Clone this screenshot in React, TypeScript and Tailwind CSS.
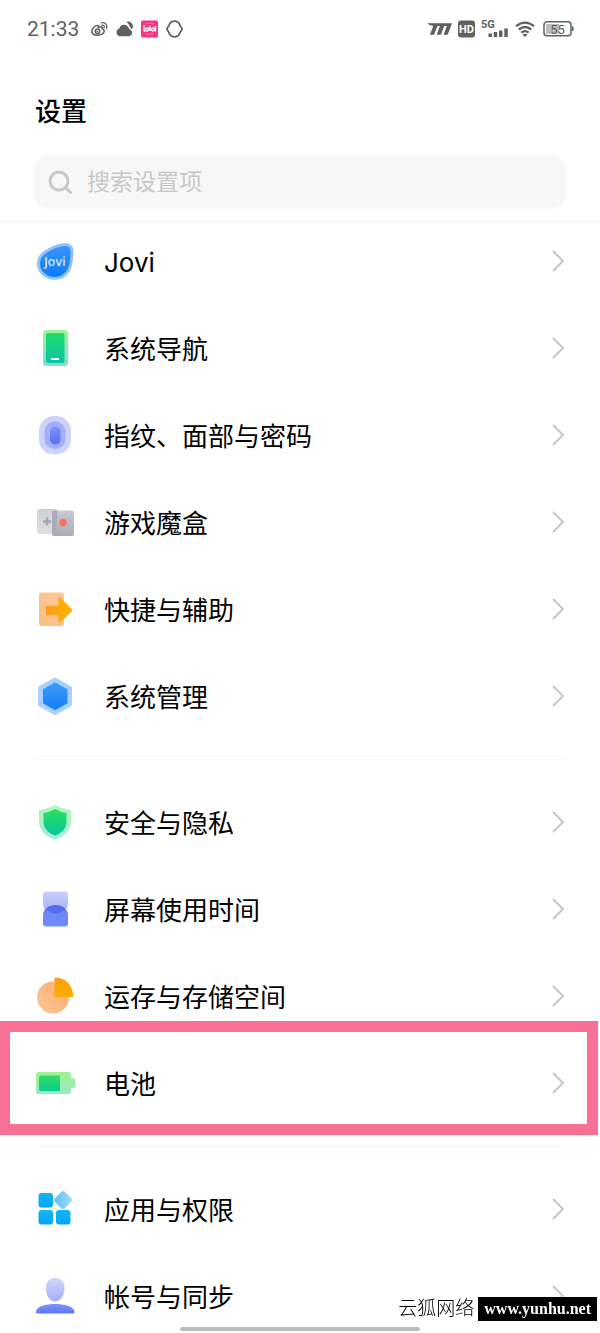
import type { ReactNode } from 'react';

type Item = {
  label: string;
  icon: ReactNode;
  highlighted?: boolean;
};

const Gradient = ({ id, from, to }: { id: string; from: string; to: string }) => (
  <linearGradient id={id} x1="0" y1="0" x2="0" y2="1">
    <stop offset="0" stopColor={from} />
    <stop offset="1" stopColor={to} />
  </linearGradient>
);

const Icon = ({ children }: { children: ReactNode }) => (
  <svg className="size-10 shrink-0" viewBox="0 0 40 40" fill="none" aria-hidden="true">
    {children}
  </svg>
);

const groups: Item[][] = [
  [
    {
      label: 'Jovi',
      icon: (
        <Icon>
          <defs><Gradient id="jovi" from="#3a94fb" to="#0b7cf8" /></defs>
          <path d="M28 2.3C34 1.500 38 4 38.400 9C38.700 14 38.300 19 37 24C35 33 28.500 38.700 20 38.700C9.500 38.700 2 32 2 22.500C2 15.500 7 10.500 13 7.500C18 4.700 23 3 28 2.300Z" fill="#8fc4fb" />
          <path d="M28 5.200C33 4.700 35.400 6.500 35.600 10C35.800 14 35.300 18.500 34.300 23C32.500 31 27 36 20 36C11 36 5 30 5 22.500C5 17 9 12.700 15 9.700C19.500 7.300 24 5.700 28 5.200Z" fill="url(#jovi)" />
          <text x="20" y="25" textAnchor="middle" fontSize="12" fontFamily="DejaVu Sans, sans-serif" fill="#fff">Jovi</text>
        </Icon>
      ),
    },
    {
      label: '系统导航',
      icon: (
        <Icon>
          <defs>
            <Gradient id="nav-a" from="#a0f29a" to="#7edfcf" />
            <Gradient id="nav-b" from="#1fdb69" to="#08c5a4" />
          </defs>
          <rect x="8" y="2" width="25" height="36" rx="3.5" fill="url(#nav-a)" />
          <rect x="11" y="5" width="18.5" height="30" rx="2" fill="url(#nav-b)" />
          <rect x="16" y="30" width="8" height="2" rx="0.5" fill="#fff" />
        </Icon>
      ),
    },
    {
      label: '指纹、面部与密码',
      icon: (
        <Icon>
          <defs><Gradient id="finger" from="#7b93fb" to="#5a6ff2" /></defs>
          <rect x="4" y="1" width="32" height="38.5" rx="15" fill="#cdd3fa" />
          <rect x="9.5" y="6.5" width="21" height="27.5" rx="10" fill="#a3b0f8" />
          <rect x="15" y="11.5" width="10.5" height="18" rx="5" fill="url(#finger)" />
        </Icon>
      ),
    },
    {
      label: '游戏魔盒',
      icon: (
        <Icon>
          <defs>
            <Gradient id="game-a" from="#cfd1d8" to="#dddfe3" />
            <Gradient id="game-b" from="#c9cad2" to="#a9abb6" />
          </defs>
          <rect x="2" y="7" width="21" height="25" rx="3" fill="url(#game-a)" />
          <rect x="17" y="8.5" width="22" height="25.5" rx="2.5" fill="url(#game-b)" />
          <path d="M19 8.500h3v25.500h-3a2 2 0 0 1-2-2V10.500a2 2 0 0 1 2-2z" fill="#aaacb9" />
          <path d="M8 19.500h8M12 15.500v8" stroke="#a4a6b1" strokeWidth="2.5" />
          <circle cx="28" cy="20.5" r="3.7" fill="#fb7060" />
        </Icon>
      ),
    },
    {
      label: '快捷与辅助',
      icon: (
        <Icon>
          <defs>
            <linearGradient id="quick-a" x1="1" y1="0" x2="0" y2="1">
              <stop offset="0" stopColor="#fdc79b" />
              <stop offset="1" stopColor="#fbbd83" />
            </linearGradient>
            <linearGradient id="quick-b">
              <stop offset="0" stopColor="#fb9d1c" />
              <stop offset="1" stopColor="#ffb400" />
            </linearGradient>
          </defs>
          <rect x="4" y="3.5" width="25" height="33.5" rx="3" fill="url(#quick-a)" />
          <path d="M12 17H23.500V9Q23.500 7 25 8.200L37 20.300Q37.800 21.200 37 22L25 33.800Q23.500 35 23.500 33V26H12Q11 26 11 25V18Q11 17 12 17Z" fill="url(#quick-b)" />
        </Icon>
      ),
    },
    {
      label: '系统管理',
      icon: (
        <Icon>
          <defs><Gradient id="manage" from="#3c9bfb" to="#1580fa" /></defs>
          <path d="M20 3.500L35 12V28.500L20 37L5 28.500V12Z" fill="#a9d1fb" stroke="#a9d1fb" strokeWidth="4" strokeLinejoin="round" />
          <path d="M20 8L31 14V26.500L20 32.500L9.500 26.500V14Z" fill="url(#manage)" stroke="url(#manage)" strokeWidth="3" strokeLinejoin="round" />
        </Icon>
      ),
    },
  ],
  [
    {
      label: '安全与隐私',
      icon: (
        <Icon>
          <defs>
            <Gradient id="safe-a" from="#b4f6b3" to="#a4ebdc" />
            <Gradient id="safe-b" from="#28df60" to="#08c59c" />
          </defs>
          <path d="M20 3Q27 7 35 8Q36 8 36 9.500V19C36 28 30 34.500 20 37.500C10 34.500 4 28 4 19V9.500Q4 8 5 8Q13 7 20 3Z" fill="url(#safe-a)" />
          <path d="M20 7Q25 10 31.500 11V19.500C31.500 26.500 27 31 20 33.500C13 31 8.500 26.500 8.500 19.500V11Q15 10 20 7Z" fill="url(#safe-b)" />
        </Icon>
      ),
    },
    {
      label: '屏幕使用时间',
      icon: (
        <Icon>
          <defs>
            <Gradient id="time-a" from="#c9d1fb" to="#a2b0f8" />
            <Gradient id="time-b" from="#6a82f7" to="#718df9" />
          </defs>
          <path d="M11 2.500H30Q33 2.500 33 5.500V15C33 20.500 27 24.500 20.500 24.500S8 20.500 8 15V5.500Q8 2.500 11 2.500Z" fill="url(#time-a)" />
          <path d="M20.500 16C27 16 33 20 33 26V34.500Q33 37.500 30 37.500H11Q8 37.500 8 34.500V26C8 20 14 16 20.500 16Z" fill="url(#time-b)" />
          <path d="M10.600 20.200Q20.500 12 30.400 20.200Q20.500 28.500 10.600 20.200Z" fill="#546df2" />
        </Icon>
      ),
    },
    {
      label: '运存与存储空间',
      icon: (
        <Icon>
          <defs>
            <linearGradient id="store-a" x1="1" y1="0" x2="0" y2="1">
              <stop offset="0" stopColor="#fbb069" />
              <stop offset="1" stopColor="#fdc49a" />
            </linearGradient>
            <Gradient id="store-b" from="#fb9d10" to="#ffae00" />
          </defs>
          <circle cx="18" cy="21.5" r="16" fill="url(#store-a)" />
          <path d="M20.500 1.500Q36 2.500 38.500 19.500Q38.500 21 37 21H19.500V2.500Q19.500 1.500 20.500 1.500Z" fill="url(#store-b)" />
        </Icon>
      ),
    },
    {
      label: '电池',
      highlighted: true,
      icon: (
        <Icon>
          <defs>
            <Gradient id="batt-a" from="#a0f28e" to="#98e8c5" />
            <Gradient id="batt-b" from="#2fdd62" to="#06cf93" />
          </defs>
          <path d="M4 9H33Q36 9 36 12V15H38Q40 15 40 17V23Q40 25 38 25H36V28Q36 31 33 31H4Q1 31 1 28V12Q1 9 4 9Z" fill="url(#batt-a)" />
          <path d="M6 12.500H25V28H6Q4 28 4 26V14.500Q4 12.500 6 12.500Z" fill="url(#batt-b)" />
        </Icon>
      ),
    },
  ],
  [
    {
      label: '应用与权限',
      icon: (
        <Icon>
          <defs>
            <Gradient id="apps" from="#15b5f5" to="#03a4fb" />
            <linearGradient id="apps-d">
              <stop offset="0" stopColor="#69c4f9" />
              <stop offset="1" stopColor="#90d8fb" />
            </linearGradient>
          </defs>
          <rect x="3.5" y="4" width="14.5" height="14.5" rx="3" fill="url(#apps)" />
          <rect x="3.5" y="21" width="14.5" height="14.5" rx="3" fill="url(#apps)" />
          <rect x="21" y="21" width="14.5" height="14.5" rx="3" fill="url(#apps)" />
          <path d="M28 4L35 11L28 18L21 11Z" fill="url(#apps-d)" stroke="url(#apps-d)" strokeWidth="4" strokeLinejoin="round" />
        </Icon>
      ),
    },
    {
      label: '帐号与同步',
      icon: (
        <Icon>
          <defs>
            <Gradient id="user-a" from="#cfd5fc" to="#a4b0f8" />
            <Gradient id="user-b" from="#7f95f8" to="#5f76f4" />
          </defs>
          <path d="M20 2C26 2 29.500 6 29.500 12C29.500 20 25 25.500 20 25.500S11 20 11 12C11 6 14 2 20 2Z" fill="url(#user-a)" />
          <path d="M20 28C29 28 39 30 39.500 36Q39.500 37.500 38 37.500H2.500Q1 37.500 1 36C1.500 30 11 28 20 28Z" fill="url(#user-b)" />
        </Icon>
      ),
    },
  ],
];

const StatusBar = () => (
  <div className="flex items-center justify-between pt-4 pr-[26px] pl-[27px] text-[#606060]">
    <div className="flex items-center gap-2">
      <time className="mr-1 text-[21px] leading-[26px]">21:33</time>
      <svg className="h-[18px] w-[17px]" viewBox="0 0 17 18" fill="none" stroke="currentColor" aria-hidden="true">
        <path d="M7 5.800C5 4.500.8 8.500.8 11.300C.8 14 3.500 15.200 6.500 15.200C10.500 15.200 13.200 13 13.200 11C13.200 9.500 12 9 11.200 8.800C11.800 7 10.500 6.200 7.600 7.400C7.900 6.500 7.600 6 7 5.800Z" strokeWidth="1.6" />
        <circle cx="6.5" cy="11.3" r="2.3" strokeWidth="1.5" />
        <circle cx="6.2" cy="11.6" r="0.9" fill="currentColor" stroke="none" />
        <path d="M10.500 2.800C14.500 2 16.500 5 15.500 8.300M10.800 5.200C12.700 4.800 13.600 6 13.100 7.600" strokeWidth="1.3" strokeLinecap="round" />
      </svg>
      <svg className="h-[18px] w-[17px]" viewBox="0 0 17 18" fill="currentColor" aria-hidden="true">
        <path d="M4.200 16.300A4 4 0 0 1 3.300 8.500A5 5 0 0 1 12.600 7.600C13 9 13.400 9.300 14.300 9.700A3.500 3.500 0 0 1 13.300 16.300Z" />
        <path d="M10.300 2A4.800 4.800 0 0 1 16.500 8.300L15.800 9.200Q14.300 8.400 14.100 7Q13.400 4 10.300 2Z" />
      </svg>
      <svg className="h-[18px] w-[17px]" viewBox="0 0 17 18" aria-hidden="true">
        <rect y="0.5" width="17" height="17" rx="1.5" fill="#fb3187" />
        <path d="M3 5.500v5q0 1 1.500 1M14.500 6v5.500M9 5.500v5.500" stroke="#fff" strokeWidth="1.5" fill="none" />
        <circle cx="6.2" cy="9.5" r="1.5" stroke="#fff" strokeWidth="1.3" fill="none" />
        <circle cx="12" cy="9.5" r="1.5" stroke="#fff" strokeWidth="1.3" fill="none" />
        <path d="M4 4Q8.500 2.500 13 4M5 13.700Q8.500 14.500 12 13.700" stroke="#fc85b6" fill="none" />
      </svg>
      <svg className="h-[18px] w-[17px]" viewBox="0 0 17 18" fill="none" stroke="currentColor" strokeWidth="1.8" strokeLinejoin="round" aria-hidden="true">
        <path d="M5.500 1.800Q8.500.6 11.500 1.800Q13.500 3 14.300 6Q16 8 16 9Q16 10 14.300 12Q13.500 15 11.500 16.200Q8.500 17.400 5.500 16.200Q3.500 15 2.700 12Q1 10 1 9Q1 8 2.700 6Q3.500 3 5.500 1.800Z" />
      </svg>
    </div>
    <div className="flex items-center gap-[6px]">
      <svg className="h-[18px] w-[25px]" viewBox="0 0 26 18" fill="currentColor" aria-hidden="true">
        <path d="M0 3H26L21.500 15H17.200L20.700 6H17.900L14.500 15H10L13.500 6H10.900L7.300 15H3L6.500 6Q3.500 6 0 3Z" />
      </svg>
      <svg className="h-[18px] w-[17px]" viewBox="0 0 17 18" aria-hidden="true">
        <rect y="0.5" width="17" height="17" rx="3" fill="currentColor" />
        <text x="8.5" y="13" textAnchor="middle" fontSize="11" fontWeight="700" fontFamily="Roboto, sans-serif" fill="#fff">HD</text>
      </svg>
      <svg className="h-[20px] w-[28px]" viewBox="0 0 28 20" fill="currentColor" aria-hidden="true">
        <text x="0" y="9" fontSize="11" fontWeight="700" fontFamily="Roboto, sans-serif">5G</text>
        <path d="M7.500 14.500h3.500v3.500h-3.500zM12.700 13h3.500v5h-3.500zM18 11.500h3.500v6.500h-3.500zM23.300 9.500h3.500v8.500h-3.500z" />
      </svg>
      <svg className="h-[18px] w-5" viewBox="0 0 20 18" fill="none" stroke="currentColor" strokeWidth="2.3" aria-hidden="true">
        <path d="M1 6.200Q10-1 19 6.200M3.800 9.500Q10 4.500 16.200 9.500M6.300 12.700Q10 9.500 13.700 12.700" />
        <path d="M7.500 14.500Q10 13 12.500 14.500L10 17Z" fill="currentColor" stroke="none" />
      </svg>
      <svg className="ml-0.5 h-[18px] w-[31px]" viewBox="0 0 31 18" aria-hidden="true">
        <rect x="1" y="1.8" width="27" height="14" rx="3" fill="none" stroke="currentColor" strokeWidth="1.5" />
        <rect x="3" y="4" width="13" height="9.8" fill="#bcbcbc" />
        <path d="M29 6.500h1.500v4.500h-1.500z" fill="currentColor" />
        <text x="14.5" y="13.5" textAnchor="middle" fontSize="13" fontFamily="Roboto, sans-serif" fill="currentColor">55</text>
      </svg>
    </div>
  </div>
);

const SettingRow = ({ label, icon, highlighted }: Item) => (
  <li className="relative">
    <a href="#" className="flex h-[79px] items-center px-[35px] pb-0.5">
      {icon}
      <span className="ml-[29px] flex-1 pt-1 text-[26px] leading-[36px]">{label}</span>
      <svg className="h-[22px] w-[13px] shrink-0" viewBox="0 0 13 22" fill="none" stroke="#c6c6c6" strokeWidth="2" aria-hidden="true">
        <path d="M1 1L11 11L1 21" />
      </svg>
    </a>
    {highlighted && (
      <div className="pointer-events-none absolute -top-[23px] right-0.5 -bottom-3 left-0 border-[11px] border-l-[10px] border-[#f87094]" />
    )}
  </li>
);

const App = () => {
  return (
    <div className="flex h-screen flex-col overflow-hidden bg-white font-[Roboto,'Noto_Sans_CJK_SC',sans-serif] text-black">
      <header className="border-b border-[#f5f5f5] pb-3">
        <StatusBar />
        <h1 className="mt-[52px] px-[35px] text-[26px] leading-[36px] font-medium">设置</h1>
        <label className="mx-[34px] mt-[25px] flex h-[54px] items-center rounded-2xl bg-[#f7f7f7] pl-[14px]">
          <svg className="size-[25px] shrink-0" viewBox="0 0 25 25" fill="none" stroke="#c8c8c8" strokeWidth="3" aria-hidden="true">
            <circle cx="11" cy="11" r="9" />
            <path d="M17.500 17.500L23.500 23.500" />
          </svg>
          <input
            type="search"
            aria-label="搜索设置项"
            placeholder="搜索设置项"
            className="ml-[14px] min-w-0 flex-1 bg-transparent pt-0.5 text-[23px] leading-[34px] outline-none placeholder:text-[#c8c8c8]"
          />
        </label>
      </header>

      <main className="min-h-0 flex-1 overflow-hidden font-[Inter,'Noto_Sans_CJK_SC',sans-serif]">
        {groups.map((items, i) => (
          <section key={i}>
            {i > 0 && <hr className="mx-[33px] my-[23px] border-[#f5f5f5]" />}
            <ul className="flex flex-col gap-2">
              {items.map((item) => (
                <SettingRow key={item.label} {...item} />
              ))}
            </ul>
          </section>
        ))}
      </main>

      {/* Gesture bar */}
      <div className="fixed inset-x-0 bottom-0.5 mx-auto h-1 w-2/5 rounded-full bg-[#bdbdbd]" />

      {/* Site mark */}
      <div className="fixed right-[3px] bottom-3 flex items-center gap-1 leading-6">
        <span className="text-[19px] font-light">云狐网络</span>
        <span className="bg-black px-[6px] font-['Liberation_Serif',serif] text-[16px] font-bold text-white">www.yunhu.net</span>
      </div>
    </div>
  );
};

export default App;
